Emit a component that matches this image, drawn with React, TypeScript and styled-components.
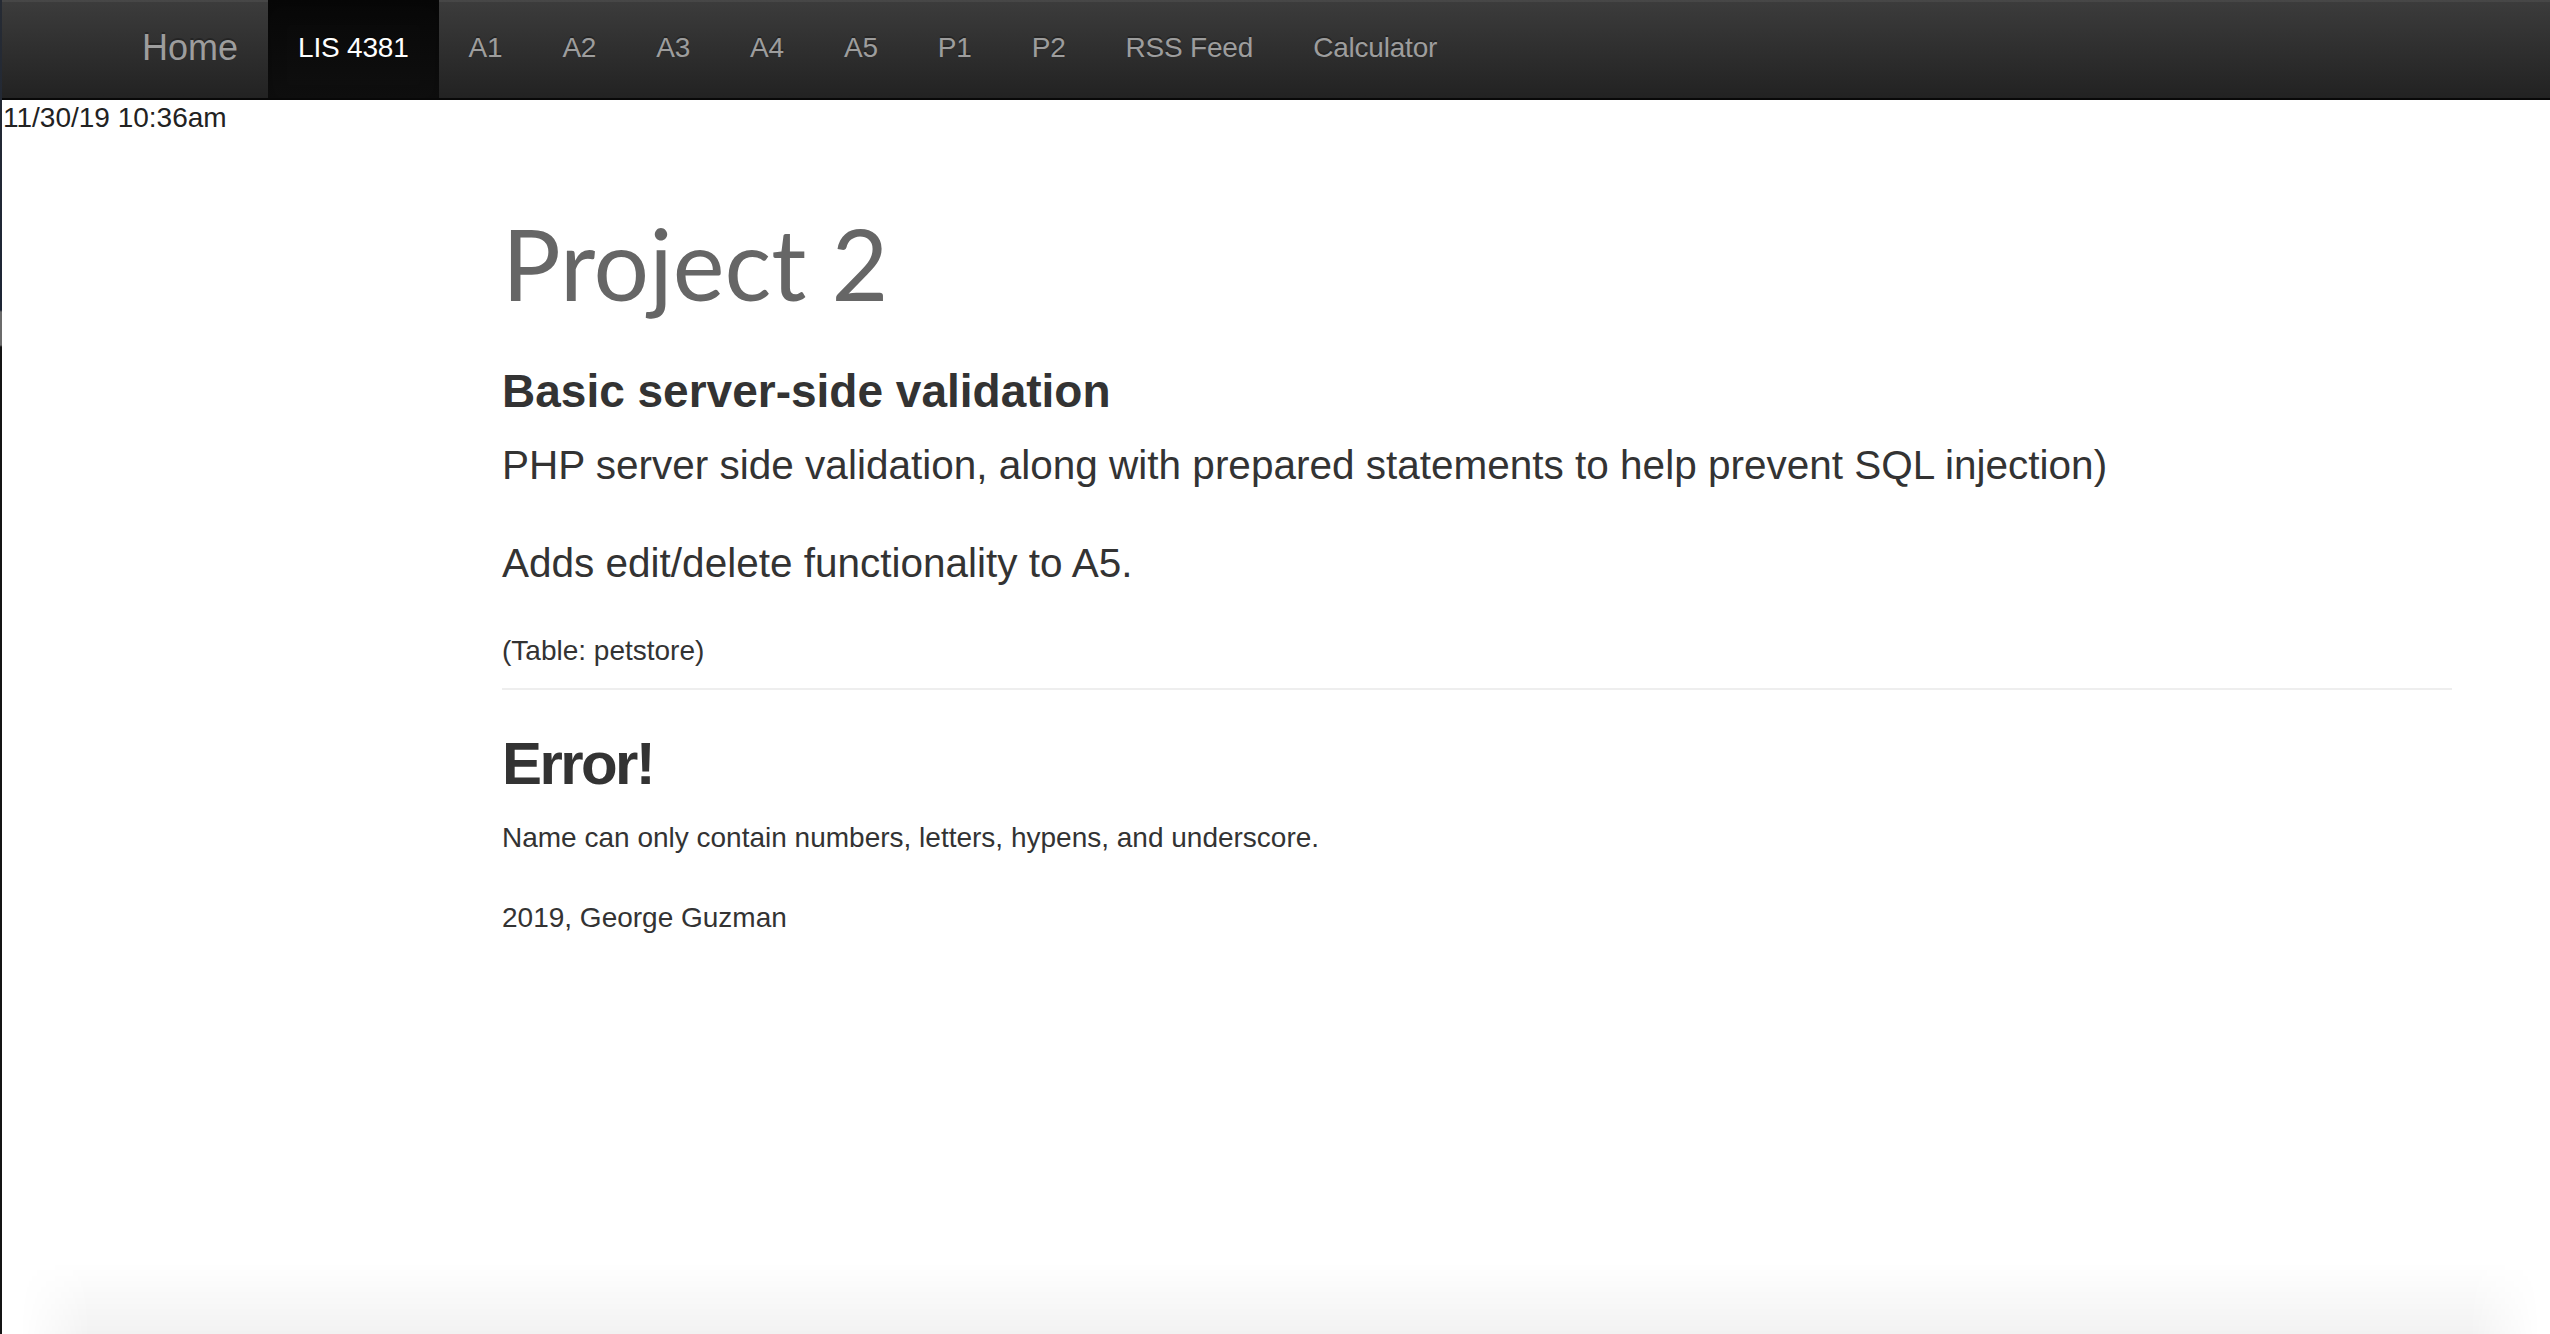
import styled, { createGlobalStyle } from "styled-components";

const GlobalStyle = createGlobalStyle`
  html, body {
    margin: 0;
    padding: 0;
    background: #fff;
  }
  body {
    font-family: "Liberation Sans", Arial, Helvetica, sans-serif;
    color: #333;
  }
`;

const Page = styled.div`
  min-height: 1334px;
  padding-left: 2px;
  box-sizing: border-box;
`;

const WindowEdge = styled.div`
  position: fixed;
  left: 0;
  top: 0;
  bottom: 0;
  width: 2px;
  background: linear-gradient(
    to bottom,
    #262b34 0,
    #1d2535 310px,
    #6b6b6b 312px,
    #6b6b6b 345px,
    #141414 347px
  );
`;

const WindowShade = styled.div`
  position: fixed;
  left: 20px;
  right: 10px;
  bottom: 0;
  height: 72px;
  pointer-events: none;
  background: linear-gradient(to bottom, rgba(0, 0, 0, 0), rgba(0, 0, 0, 0.05));
  -webkit-mask-image: linear-gradient(
    to right,
    transparent 0,
    #000 70px,
    #000 calc(100% - 70px),
    transparent 100%
  );
  mask-image: linear-gradient(
    to right,
    transparent 0,
    #000 70px,
    #000 calc(100% - 70px),
    transparent 100%
  );
`;

const Navbar = styled.nav`
  display: flex;
  align-items: stretch;
  height: 98px;
  padding-left: 110px;
  background: linear-gradient(to bottom, #3c3c3c 0, #222 100%);
  border-bottom: 2px solid #080808;
  box-shadow: inset 0 2px 0 rgba(255, 255, 255, 0.06);
`;

const Brand = styled.a`
  display: flex;
  align-items: center;
  padding: 0 30px 2px;
  font-size: 36px;
  color: #9d9d9d;
  text-decoration: none;
  text-shadow: 0 -2px 0 rgba(0, 0, 0, 0.25);
`;

const NavList = styled.ul`
  display: flex;
  margin: 0;
  padding: 0;
  list-style: none;
`;

const NavLink = styled.a<{ $active?: boolean }>`
  display: flex;
  align-items: center;
  height: 100%;
  box-sizing: border-box;
  padding: 0 30px 2px;
  font-size: 28px;
  letter-spacing: -0.2px;
  color: ${(p) => (p.$active ? "#fff" : "#9d9d9d")};
  text-decoration: none;
  text-shadow: 0 -2px 0 rgba(0, 0, 0, 0.25);
  background: ${(p) =>
    p.$active ? "linear-gradient(to bottom, #080808 0, #0f0f0f 100%)" : "transparent"};
  box-shadow: ${(p) => (p.$active ? "inset 0 6px 18px rgba(0, 0, 0, 0.25)" : "none")};
`;

const Stamp = styled.div`
  font-size: 28px;
  line-height: 36px;
  color: #222;
  padding-left: 1px;
`;

const Main = styled.main`
  width: 1950px;
  margin-left: 500px;
  padding-top: 72px;
`;

const Title = styled.h1`
  margin: 0;
  font-family: Lato, "Liberation Sans", sans-serif;
  font-weight: 400;
  font-size: 98px;
  line-height: 110px;
  color: #666;
`;

const Subtitle = styled.h3`
  margin: 45px 0 0;
  font-size: 46px;
  line-height: 56px;
  font-weight: 700;
  color: #333;
`;

const Lead = styled.p<{ $gap: number }>`
  margin: ${(p) => p.$gap}px 0 0;
  font-size: 40.5px;
  line-height: 60px;
  font-weight: 300;
  color: #333;
`;

const Text = styled.p<{ $gap: number }>`
  margin: ${(p) => p.$gap}px 0 0;
  font-size: 28px;
  line-height: 40px;
  color: #333;
`;

const Rule = styled.hr`
  margin: 17px 0 0;
  border: 0;
  border-top: 2px solid #eee;
`;

const ErrorTitle = styled.h2`
  margin: 41px 0 0;
  font-size: 60px;
  line-height: 66px;
  font-weight: 700;
  letter-spacing: -2.6px;
  color: #333;
`;

const navItems = ["A1", "A2", "A3", "A4", "A5", "P1", "P2", "RSS Feed", "Calculator"];

export default function App() {
  return (
    <>
      <GlobalStyle />
      <Page>
        <WindowEdge />
        <Navbar>
          <Brand href="#">Home</Brand>
          <NavList>
            <li>
              <NavLink href="#" $active>
                LIS 4381
              </NavLink>
            </li>
            {navItems.map((item) => (
              <li key={item}>
                <NavLink href="#">{item}</NavLink>
              </li>
            ))}
          </NavList>
        </Navbar>
        <Stamp>11/30/19 10:36am</Stamp>
        <Main>
          <Title>Project 2</Title>
          <Subtitle>Basic server-side validation</Subtitle>
          <Lead $gap={16}>
            PHP server side validation, along with prepared statements to help prevent SQL
            injection)
          </Lead>
          <Lead $gap={38}>Adds edit/delete functionality to A5.</Lead>
          <Text $gap={38}>(Table: petstore)</Text>
          <Rule />
          <ErrorTitle>Error!</ErrorTitle>
          <Text $gap={21}>Name can only contain numbers, letters, hypens, and underscore.</Text>
          <Text $gap={40}>2019, George Guzman</Text>
        </Main>
        <WindowShade />
      </Page>
    </>
  );
}
